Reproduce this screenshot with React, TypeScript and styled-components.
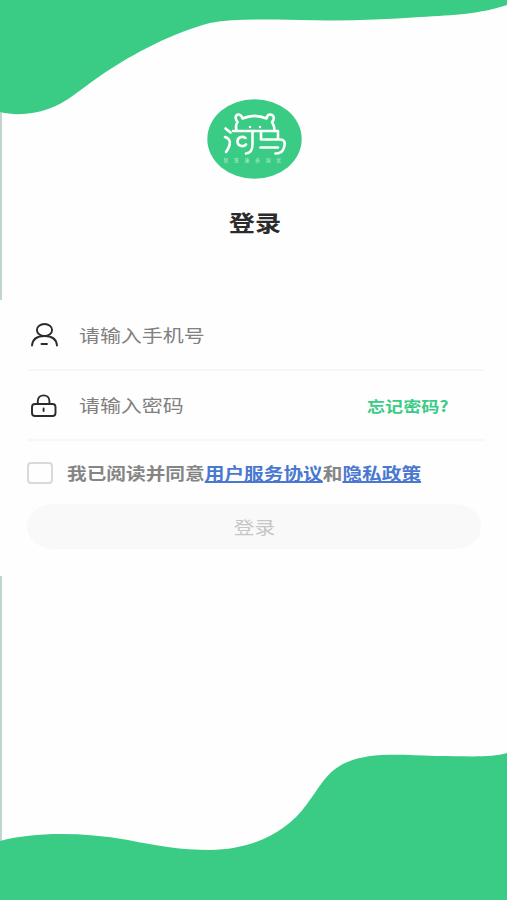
import React from "react";
import styled, { createGlobalStyle } from "styled-components";

const GREEN = "#3acb85";

const GlobalStyle = createGlobalStyle`
  * { box-sizing: border-box; }
  body {
    margin: 0;
    background: #fefefe;
    font-family: "Noto Sans CJK SC", sans-serif;
  }
`;

const Screen = styled.main`
  position: relative;
  width: 507px;
  height: 900px;
  overflow: hidden;
  background: #fefefe;
`;

const Backdrop = styled.svg`
  position: absolute;
  inset: 0;
  display: block;
`;

const Content = styled.div`
  position: relative;
  display: flex;
  flex-direction: column;
  padding: 99px 22px 0 27px;
`;

const Header = styled.header`
  display: flex;
  flex-direction: column;
  align-items: center;
  height: 202px;
  padding-right: 3px;
`;

const Logo = styled.svg`
  display: block;
  flex: none;
`;

const Wide = styled.span<{ $origin?: string }>`
  display: inline-block;
  white-space: nowrap;
  transform: scaleX(1.19);
  transform-origin: ${(p) => p.$origin ?? "left"} center;
`;

const Title = styled.h1`
  margin: 26px 0 0;
  padding-left: 2px;
  font-size: 22px;
  line-height: 32px;
  font-weight: 700;
  color: #2b2b2b;
`;

const Field = styled.label`
  display: flex;
  align-items: center;
  height: 70px;
  border-bottom: 2px solid #f7f7f7;
`;

const FieldIcon = styled.svg`
  flex: none;
  width: 34px;
  height: 30px;
  margin-right: 17.5px;
  fill: none;
  stroke: #2b2b2b;
  stroke-width: 1.9;
  stroke-linecap: round;
`;

const Placeholder = styled.span`
  flex: 1;
  font-size: 17.6px;
  line-height: 26px;
  color: #808080;
`;

const Forgot = styled.a`
  width: 118px;
  font-size: 15.2px;
  line-height: 24px;
  font-weight: 700;
  color: ${GREEN};
`;

const Consent = styled.div`
  display: flex;
  align-items: center;
  height: 63px;
  padding-top: 1px;
  font-size: 16.55px;
  line-height: 24px;
  font-weight: 700;
  color: #858585;
`;

const Checkbox = styled.span`
  flex: none;
  width: 26px;
  height: 22px;
  margin-right: 14px;
  border: 2px solid #dadada;
  border-radius: 4px;
`;

const Policy = styled.a`
  color: #4a78d0;
  text-decoration: underline;
  text-decoration-thickness: 1.5px;
  text-underline-offset: 1px;
`;

const Submit = styled.button`
  width: 454px;
  height: 45px;
  padding: 0;
  border: 0;
  border-radius: 26px / 22px;
  background: #f9f9f9;
  color: #c6c6c6;
  font: 400 17.4px/26px "Noto Sans CJK SC", sans-serif;
`;

export default function App() {
  return (
    <>
      <GlobalStyle />
      <Screen>
        <Backdrop width="507" height="900" viewBox="0 0 507 900">
          <path d="M0 100H2V300H0ZM0 576H2V850H0Z" fill="#bfd6cf" />
          <g fill={GREEN}>
            <path d="M0 0H507V5C480 14 455 15 420 17C380 20 340 21 300 20C265 20 235 18 210 23C175 32 135 52 100 76C78 91 66 103 48 109C34 114 16 116 0 112Z" />
            <path d="M0 841C35 832 80 832 128 840C158 846 181 850 210 850C255 849 288 831 307 804C320 787 326 772 345 763C370 752 400 755 435 756C467 756 490 758 507 753V900H0Z" />
          </g>
        </Backdrop>
        <Content>
          <Header>
            <Logo width="95" height="80" viewBox="207 99 95 80">
              <ellipse cx="254.5" cy="139" rx="47.2" ry="39.8" fill={GREEN} />
              <g fill="none" stroke="#fff" strokeWidth="2.6" strokeLinecap="round" strokeLinejoin="round">
                <path d="M236.500 130C235.500 126 236 124 237.500 122C234 118 236 114 239 114.500C241 115 242 116.500 242.500 118.500C250 115.200 259 115.200 266.500 118.500C267 116 268.500 114.500 270 114.500C274 114.500 275 119 272 122C274 125 274.500 127 274.500 131" />
                <path d="M225.500 128.500L230.500 132.500M225 137C231 139 231.500 144 226 152" />
                <path d="M233 131H254M252.500 131V144C252.500 150 251 153 246 153.500M245.500 138C242 135.500 237.500 137.500 237.500 141.500C237.500 146 243 147.500 246 144.500" />
                <path d="M254 131H278V139M261 131V139.500H280C285.500 139.500 285.500 144 283.500 149C282 152.500 280 153.500 275.500 153.500M260.500 147.500H278" />
              </g>
              <g fill="#fff">
                <circle cx="250" cy="127" r="1.2" />
                <circle cx="260" cy="127" r="1.2" />
                <text x="223.500" y="162" fontSize="4.5" letterSpacing="6.100" opacity=".65">智慧康养国优</text>
              </g>
            </Logo>
            <Title><Wide $origin="center">登录</Wide></Title>
          </Header>
          <Field>
            <FieldIcon viewBox="0 0 34 30">
              <ellipse cx="17.500" cy="10" rx="7.600" ry="6" />
              <path d="M5 25.500C5.500 20 9 16 17.500 16C26 16 29.500 20 30 25.500M14.500 24H20" />
            </FieldIcon>
            <Placeholder><Wide>请输入手机号</Wide></Placeholder>
          </Field>
          <Field>
            <FieldIcon viewBox="0 0 34 30">
              <rect x="5" y="14" width="23.500" height="12" rx="3" />
              <path d="M10.800 14V11C10.800 3.500 22.400 3.500 22.400 11V14M16.600 18.500V21" />
            </FieldIcon>
            <Placeholder><Wide>请输入密码</Wide></Placeholder>
            <Forgot><Wide>忘记密码?</Wide></Forgot>
          </Field>
          <Consent>
            <Checkbox />
            <Wide>我已阅读并同意<Policy>用户服务协议</Policy>和<Policy>隐私政策</Policy></Wide>
          </Consent>
          <Submit disabled><Wide $origin="center">登录</Wide></Submit>
        </Content>
      </Screen>
    </>
  );
}
